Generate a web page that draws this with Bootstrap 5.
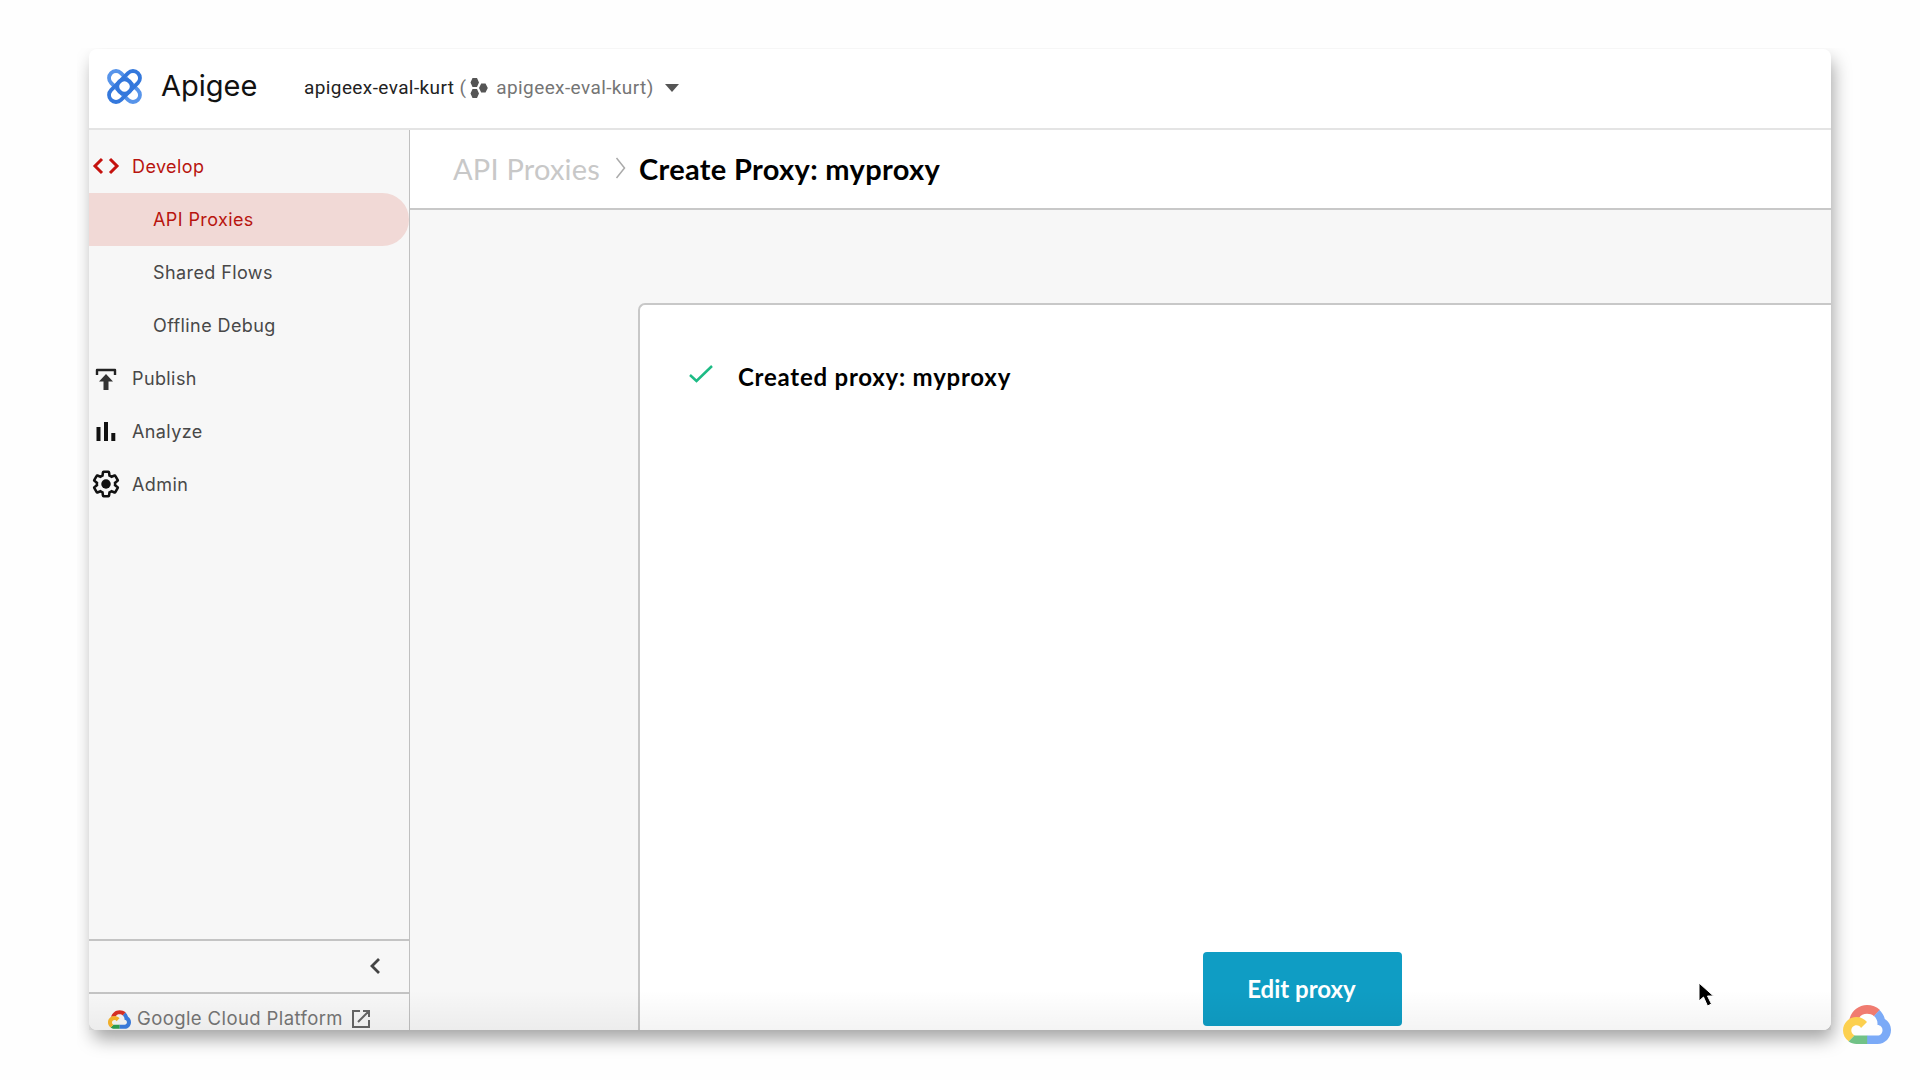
<!DOCTYPE html>
<html lang="en">
<head>
<meta charset="utf-8">
<title>Apigee</title>
<link href="https://cdn.jsdelivr.net/npm/bootstrap@5.3.0/dist/css/bootstrap.min.css" rel="stylesheet">
<style>
body{background:#fefefe;height:1080px;overflow:hidden;font-family:Inter,Roboto,"Liberation Sans",sans-serif;color:#444}
.stage{padding:49px 89px 50px}
.app-window{height:981px;border-radius:8px;background:#fff;box-shadow:3px 10px 18px -1px rgba(0,0,0,.36);clip-path:inset(-1px -40px -50px -12px)}
.app-inner{border-radius:8px;overflow:hidden}
.topbar{height:81px;border-bottom:2px solid #e4e4e4;padding:0 0 5px 17px}
.brand{font-size:29px;color:#111;margin-left:18px;width:143px;line-height:36px}
.project{font-family:Roboto,"Liberation Sans",sans-serif;font-size:19px;letter-spacing:.4px;color:#222;margin-top:4px}
.paren{margin:0 4px 0 5px}
.project-id{margin:0 11px 0 8px}
.muted{color:#757575}
.sidebar{width:321px;border-right:1.500px solid #c0c0c0;background:#f7f7f7;padding-top:10px}
.side-item{height:53px;font-size:18px;letter-spacing:.4px;color:#484848;padding-bottom:1px}
.side-item span{padding-top:1px}
.side-item svg{margin-left:3px;margin-right:12px}
.side-child{padding-left:64px}
.side-item.red{color:#b8150f}
.side-active{background:#f1d9d6;border-radius:0 27px 27px 0}
.side-foot{height:53px;border-top:2px solid #c4c4c4;padding-right:24px}
.gcp{height:38px;font-size:18.5px;letter-spacing:.4px;color:#757575;border-top:2px solid #c4c4c4;padding:12px 0 0 19px}
.gcp span{line-height:24px;margin:0 9px 0 6px}
.lato{font-family:Lato,"Liberation Sans",sans-serif}
.crumbs{height:80px;border-bottom:2px solid #c8c8c8;padding-left:43px;font-size:29px}
.crumb-parent{color:#c8c8c8;letter-spacing:.2px}
.crumb-here{letter-spacing:.33px}
.crumb-sep{margin:0 13px 0 15px}
.content{background:#f7f7f7;padding:93px 0 0 228px}
.panel{border:2px solid #c8c8c8;border-right:0;border-bottom:0;border-radius:7px 0 0 0;background:#fff}
.status{padding:54px 0 0 48px;font-size:24px;font-weight:700;color:#000;letter-spacing:.77px;line-height:36px}
.status svg{margin:0 24px 7px 0}
.edit{width:199px;height:74px;background:#0f9dc4;color:#fff;border-radius:4px;font-size:24px;font-weight:700;margin-left:563px;margin-bottom:4px;border:0;padding:0 8px 0 6px}
.fade-bottom{height:40px;bottom:0;background:linear-gradient(rgba(0,0,0,0),rgba(0,0,0,.045))}
.pointer{left:1697px;top:981px}
.watermark{left:1843px;top:1005px}
.c1{fill:var(--r,#d93025)}.c2{fill:var(--b,#3b7de0)}.c3{fill:var(--g,#2da052)}.c4{fill:var(--y,#f9b52c)}
.watermark{--r:#f07b70;--b:#7baaf7;--g:#71c287;--y:#fcd04f}
</style>
</head>
<body>
<svg width="0" height="0" class="position-absolute"><defs>
<symbol id="cloud" viewBox="0 0 48 39">
<path class="c1" d="M6.500 14C8.500 6 15.500 0 24 0c5 0 9.500 1.800 13 5l-6 6.200C29.200 9.600 27 8.800 24 8.800c-3.500 0-6.500 1.300-8 4.500z"/>
<path class="c2" d="M36.500 4.900c2.500 2.500 4.500 5.600 5.300 9.100 3.800 2.200 6.200 6.300 6.200 11 0 7.700-6 14-13.500 14H24v-8.500h10.500c3 0 5-2.400 5-5.300 0-3-2.200-5.200-5-5.200v-1.500c0-3-1.300-5.500-3.500-7.500z"/>
<path class="c3" d="M24.200 30.500V39H13.500c-3 0-5.800-1-8-2.800l6-6c.6.200 1.300.3 2 .3z"/>
<path class="c4" d="M5.600 36.300C2 33.600 0 29.700 0 25.500 0 18 6 12 13.500 12c4.300 0 8 2 10.500 5l-6 6c-.8-1.600-2.500-2.700-4.500-2.700-3 0-5.200 2.300-5.200 5.200 0 2 1.200 3.900 3.200 4.700z"/>
</symbol></defs></svg>
<div class="stage">
<div class="app-window position-relative">
<div class="app-inner d-flex flex-column h-100">
<header class="topbar d-flex align-items-center flex-shrink-0">
<svg width="37" height="37" viewBox="0 0 37 37" fill="none" stroke-width="3.800"><rect x="-.5" y="11.500" width="38" height="14" rx="7" transform="rotate(45 18.500 18.500)" stroke="#5794ea"/><rect x="-.5" y="11.500" width="38" height="14" rx="7" transform="rotate(-45 18.500 18.500)" stroke="#3478dc"/><circle cx="18.500" cy="18.500" r="7.200" stroke="#3478dc"/></svg>
<div class="brand">Apigee</div>
<div class="project d-flex align-items-center"><span>apigeex-eval-kurt</span><span class="muted paren">(</span>
<svg width="18" height="20" viewBox="0 0 18 20" fill="#555"><path d="M2.500 0h4.500l2 4.500-2 4.500H2.500l-2-4.500zM2.500 11h4.500l2 4.500-2 4.500H2.500l-2-4.500zM11.200 5.500h4.300l2.300 4.500-2.300 4.500h-4.300L9 10z"/></svg>
<span class="muted project-id">apigeex-eval-kurt)</span>
<svg width="14" height="8" viewBox="0 0 14 8"><path d="M0 0h14L7 8z" fill="#555"/></svg></div>
</header>
<div class="d-flex flex-grow-1">
<nav class="sidebar d-flex flex-column flex-shrink-0">
<div class="side-item red d-flex align-items-center"><svg width="28" height="28" viewBox="0 0 28 28" fill="none" stroke="#c5120e" stroke-width="3"><path d="M10 7l-7 7 7 7M18 7l7 7-7 7"/></svg><span>Develop</span></div>
<div class="side-item side-child side-active red d-flex align-items-center"><span>API Proxies</span></div>
<div class="side-item side-child d-flex align-items-center"><span>Shared Flows</span></div>
<div class="side-item side-child d-flex align-items-center"><span>Offline Debug</span></div>
<div class="side-item d-flex align-items-center"><svg width="28" height="28" viewBox="0 0 28 28"><path d="M5 11V6h18v5" fill="none" stroke="#222" stroke-width="2.400" stroke-linejoin="round"/><path d="M14 10l7 7.500h-4.500V26h-5v-8.500H7z" fill="#333"/></svg><span>Publish</span></div>
<div class="side-item d-flex align-items-center"><svg width="28" height="28" viewBox="0 0 28 28" fill="#111"><path d="M4.500 10h4v14h-4zM12 5h4v19h-4zM19.300 16h4v8h-4z"/></svg><span>Analyze</span></div>
<div class="side-item d-flex align-items-center"><svg width="28" height="28" viewBox=".5 .5 23 23"><path d="M19.430 12.980c.04-.32.07-.64.07-.98 0-.34-.03-.66-.07-.98l2.110-1.650c.19-.15.24-.42.12-.64l-2-3.460c-.12-.22-.39-.3-.61-.22l-2.490 1c-.52-.4-1.080-.73-1.690-.98l-.38-2.650C14.460 2.180 14.250 2 14 2h-4c-.25 0-.46.18-.49.42l-.38 2.650c-.61.25-1.170.59-1.690.98l-2.490-1c-.23-.09-.49 0-.61.22l-2 3.460c-.13.22-.07.49.12.64l2.110 1.650c-.04.32-.07.65-.07.98 0 .33.03.66.07.98l-2.110 1.650c-.19.15-.24.42-.12.64l2 3.460c.12.22.39.3.61.22l2.490-1c.52.4 1.080.73 1.690.98l.38 2.650c.03.24.24.42.49.42h4c.25 0 .46-.18.49-.42l.38-2.650c.61-.25 1.170-.59 1.690-.98l2.490 1c.23.09.49 0 .61-.22l2-3.460c.12-.22.07-.49-.12-.64z" fill="none" stroke="#111" stroke-width="2.100"/><circle cx="12" cy="12" r="3.900" fill="#111"/></svg><span>Admin</span></div>
<div class="side-foot mt-auto d-flex align-items-center justify-content-end"><svg width="20" height="20" viewBox="0 0 20 20" fill="none" stroke="#444" stroke-width="2.800"><path d="M14 2L7 9l7 7"/></svg></div>
<a class="gcp d-flex align-items-start text-decoration-none"><svg class="mt-1" width="23" height="19"><use href="#cloud"/></svg><span>Google Cloud Platform</span><svg class="mt-1" width="18" height="18" viewBox="0 0 18 18" fill="none" stroke="#666" stroke-width="2"><path d="M8 1H1v16h16v-7M11 1h6v6M17 1L6 12"/></svg></a>
</nav>
<main class="d-flex flex-column flex-grow-1 lato">
<div class="crumbs d-flex align-items-center"><span class="crumb-parent">API Proxies</span><svg class="crumb-sep" width="11" height="24" viewBox="0 0 11 24" fill="none" stroke="#aaa" stroke-width="1.500"><path d="M1.500 1l8 10-8 10"/></svg><strong class="crumb-here text-black">Create Proxy: myproxy</strong></div>
<div class="content d-flex flex-column flex-grow-1">
<section class="panel d-flex flex-column flex-grow-1">
<div class="status d-flex align-items-center"><svg width="26" height="22" viewBox="0 0 26 22" fill="none" stroke="#1dbb85" stroke-width="2.500"><path d="M2 12l6.500 6L24 3"/></svg><span>Created proxy: myproxy</span></div>
<button class="edit mt-auto">Edit proxy</button>
</section></div></main>
</div></div>
<div class="fade-bottom position-absolute w-100 pe-none"></div>
</div></div>
<svg class="pointer position-absolute" width="20" height="28" viewBox="0 0 20 28"><path d="M2 2v18l4.500-4 4 9 4-2-4-8h6z" fill="#000" stroke="#fff"/></svg>
<svg class="watermark position-absolute" width="48" height="39"><use href="#cloud"/></svg>
<script src="https://cdn.jsdelivr.net/npm/bootstrap@5.3.0/dist/js/bootstrap.bundle.min.js"></script>
</body>
</html>
